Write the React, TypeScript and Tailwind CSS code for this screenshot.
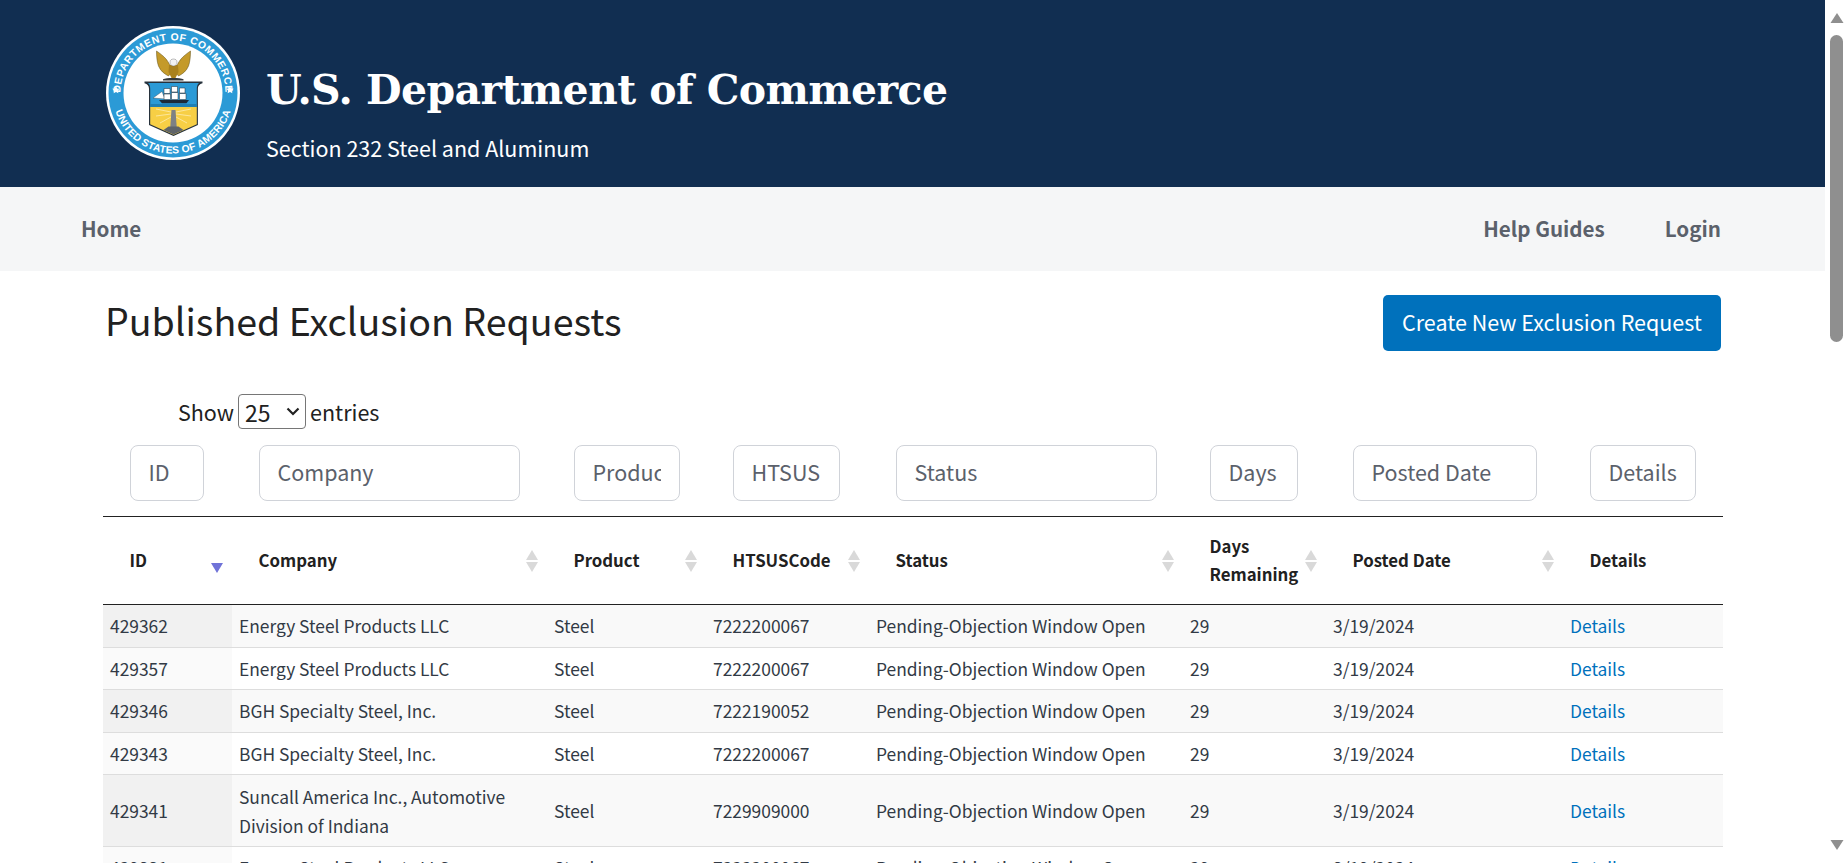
const SANS = { fontFamily: '"Noto Sans CJK SC", "Noto Sans", sans-serif' };

const rows = [
  ["429362", "Energy Steel Products LLC", "7222200067"],
  ["429357", "Energy Steel Products LLC", "7222200067"],
  ["429346", "BGH Specialty Steel, Inc.", "7222190052"],
  ["429343", "BGH Specialty Steel, Inc.", "7222200067"],
  ["429341", "Suncall America Inc., Automotive Division of Indiana", "7229909000"],
  ["429331", "Energy Steel Products LLC", "7222200067"],
];

const cols = [
  { label: "ID", ph: "ID", input: "w-[74px]", w: "w-[129px]", sort: "active" },
  { label: "Company", ph: "Company", input: "w-[261px]", w: "w-[315px]", sort: "both" },
  { label: "Product", ph: "Product", input: "w-[106px]", w: "w-[159px]", sort: "both" },
  { label: "HTSUSCode", ph: "HTSUS", input: "w-[107px]", w: "w-[163px]", sort: "both" },
  { label: "Status", ph: "Status", input: "w-[261px]", w: "w-[314px]", sort: "both" },
  { label: "Days Remaining", ph: "Days", input: "w-[88px]", w: "w-[143px]", sort: "both" },
  { label: "Posted Date", ph: "Posted Date", input: "w-[184px]", w: "w-[237px]", sort: "both" },
  { label: "Details", ph: "Details", input: "w-[106px]", w: "w-[160px]", sort: "none" },
];

function Seal() {
  return (
    <svg width="134" height="134" viewBox="0 0 134 134" className="shrink-0 mb-[2px]">
      <defs>
        <path id="sealTop" d="M 17.7 85 A 52.5 52.5 0 1 1 116.3 85" />
        <path id="sealBottom" d="M 10.15 46.3 A 60.5 60.5 0 1 0 123.85 46.3" />
      </defs>
      <circle cx="67" cy="67" r="67" fill="#ffffff" />
      <circle cx="67" cy="67" r="64.500" fill="#2b9ad6" />
      <circle cx="67" cy="67" r="49.500" fill="#ffffff" />
      <text fontFamily="Liberation Sans, sans-serif" fontSize="10.300" fontWeight="700" fill="#ffffff" letterSpacing="0.55">
        <textPath href="#sealTop" startOffset="50%" textAnchor="middle">DEPARTMENT OF COMMERCE</textPath>
      </text>
      <text fontFamily="Liberation Sans, sans-serif" fontSize="10.300" fontWeight="700" fill="#ffffff" letterSpacing="0.2">
        <textPath href="#sealBottom" startOffset="50%" textAnchor="middle">UNITED STATES OF AMERICA</textPath>
      </text>
      <path d="M10 60l1.100 2.500 2.700.3-2 1.800.6 2.700-2.400-1.400-2.400 1.400.6-2.700-2-1.800 2.700-.3z" fill="#fff" />
      <path d="M124 60l1.100 2.500 2.700.3-2 1.800.6 2.700-2.400-1.400-2.400 1.400.6-2.700-2-1.800 2.700-.3z" fill="#fff" />
      {/* eagle */}
      <path d="M50.500 25c3 2 7 5 9.500 8 1.500 1.800 2.500 3.500 3.500 5.500l1 9-2 2.500c-4-2-8-5-10-10-1.500-4-2-10-2-15z" fill="#c49a2a" stroke="#5f4c12" strokeWidth="0.5" />
      <path d="M84.500 25c-3 2-7 5-9.500 8-1.500 1.800-2.500 3.500-3.500 5.500l-1 9 2 2.500c4-2 8-5 10-10 1.500-4 2-10 2-15z" fill="#c49a2a" stroke="#5f4c12" strokeWidth="0.5" />
      <path d="M63 39h9l.5 7-3 6h-4l-3-6z" fill="#a9811d" />
      <path d="M64 36c0-2 1.500-3 3.500-3s3.500 1 3.500 3c0 2-1 4-3.500 4S64 38 64 36z" fill="#f2f2f2" stroke="#666" strokeWidth="0.4" />
      <path d="M57 53.200c3-1.600 17-1.600 20.500 0v1.300h-20.500z" fill="#34393d" />
      {/* shield */}
      <path d="M38.500 55.500h58v1.800c-3 .8-4.600 2.600-4.600 5.400V99L67.500 110 43 99V62.700c0-2.800-1.600-4.600-4.500-5.400z" fill="#27323c" />
      <path d="M42 57h51c-1.400 1.200-2.200 3.200-2.200 5.700V81H44.200V62.700c0-2.500-.8-4.500-2.200-5.700z" fill="#2b9ad6" />
      <path d="M44.200 81h46.600v17.200L67.500 108.700 44.200 98.200z" fill="#f7cf45" />
      {/* ship */}
      <path d="M47 72l9-6.500 3 7.500z" fill="#fff" stroke="#31404c" strokeWidth="0.4" />
      <path d="M58 62.500h6v5h-6zM58 68h6.500v5.500H58zM65.500 60.500h6v5.500h-6zM65.500 66.500h6.500v7h-6.500zM73.500 62h5.500v5h-5.500zM73.500 67.500h6.500v6h-6.500z" fill="#ffffff" stroke="#2b3640" strokeWidth="0.55" />
      <path d="M53 74h30l-2.500 3.200H56z" fill="#1d2a38" />
      <path d="M44.200 78h46.600v3H44.200z" fill="#1f7fb3" />
      {/* lighthouse */}
      <path d="M50 83l15 3M50 90l15-2M85 83l-15 3M85 90l-15-2M54 97l11-6M81 97l-11-6" stroke="#fde9a3" strokeWidth="0.9" />
      <path d="M65.500 84h4l1.200 17h-6.400z" fill="#7d8184" />
      <path d="M57.500 104l5-3.500h10l5 3.500-10 4.500z" fill="#5f6468" />
    </svg>
  );
}

function SortIcon({ kind }: { kind: string }) {
  if (kind === "none") return null;
  if (kind === "active") {
    return (
      <svg width="14" height="12" viewBox="0 0 14 12" className="absolute right-[8px] top-[45px]">
        <path d="M1 1h12l-6 10z" fill="#7073d8" />
      </svg>
    );
  }
  return (
    <svg width="14" height="24" viewBox="0 0 14 24" className="absolute right-[8px] top-[32px]">
      <path d="M7 1l6 10H1z" fill="#d9d9d9" />
      <path d="M1 13h12l-6 10z" fill="#d9d9d9" />
    </svg>
  );
}

function Scrollbar() {
  return (
    <aside className="w-[23px] h-[863px] shrink-0 bg-white flex flex-col items-center relative">
      <svg width="16" height="12" viewBox="0 0 16 12" className="mt-[12px] shrink-0">
        <path d="M8 1l6.500 10H1.500z" fill="#8f8f8f" />
      </svg>
      <div className="w-[13px] h-[307px] mt-[11px] rounded-t-[7px] rounded-b-[7px] bg-[#8f8f8f] shrink-0" />
      <svg width="16" height="12" viewBox="0 0 16 12" className="mt-auto mb-[12px] shrink-0">
        <path d="M1.500 1h13L8 11z" fill="#8f8f8f" />
      </svg>
    </aside>
  );
}

export default function App() {
  return (
    <div className="flex w-[1848px] h-[863px] overflow-hidden bg-white" style={SANS}>
      <main className="w-[1825px] h-[863px] overflow-hidden shrink-0">
        <header className="h-[187px] bg-[#112e51] flex items-center pl-[106px] gap-[26px] text-white">
          <Seal />
          <div className="flex flex-col pt-[38px]">
            <h1 className="text-[41px] leading-[56px] font-bold tracking-[-0.6px]" style={{ fontFamily: '"DejaVu Serif", serif' }}>
              U.S. Department of Commerce
            </h1>
            <p className="text-[21.500px] leading-[30px] mt-[15px]">Section 232 Steel and Aluminum</p>
          </div>
        </header>

        <nav className="h-[84px] bg-[#f5f6f7] flex items-center justify-between pl-[81px] pr-[104px] pb-[1px] text-[20.600px] font-semibold text-[#5b616b]">
          <a>Home</a>
          <div className="flex gap-[60px]">
            <a>Help Guides</a>
            <a>Login</a>
          </div>
        </nav>

        <section className="pl-[103px] pr-[102px]">
          <div className="flex items-center justify-between pt-[24px] pl-[2px] pr-[2px]">
            <h2 className="text-[37.600px] leading-[56px] text-[#212121] -translate-y-[3px]">Published Exclusion Requests</h2>
            <button className="h-[56px] w-[338px] rounded-[5px] bg-[#0071bc] text-white text-[21.500px] font-normal pb-[2px]">
              Create New Exclusion Request
            </button>
          </div>

          <div className="flex items-center gap-[4px] pl-[75px] mt-[43px] text-[21.500px] leading-[35px] text-[#212121]">
            <span>Show</span>
            <div className="relative w-[68px] h-[35px]">
              <select className="appearance-none w-[68px] h-[35px] rounded-[4px] border border-[#767676] bg-white pl-[6px] text-[23px]" defaultValue="25">
                <option>10</option>
                <option>25</option>
                <option>50</option>
                <option>100</option>
              </select>
              <svg width="14" height="9" viewBox="0 0 14 9" className="absolute right-[6px] top-[13px] pointer-events-none">
                <path d="M1.500 1.500l5.500 5.500 5.500-5.500" fill="none" stroke="#222" strokeWidth="2.200" />
              </svg>
            </div>
            <span>entries</span>
          </div>

          <table className="w-[1620px] table-fixed border-collapse mt-[16px] text-[#212121]">
            <colgroup>
              {cols.map((c) => (
                <col key={c.label} className={c.w} />
              ))}
            </colgroup>
            <thead>
              <tr>
                {cols.map((c) => (
                  <th key={c.ph} className="pl-[26.500px] pb-[15px] text-left font-normal">
                    <input
                      placeholder={c.ph}
                      readOnly
                      className={`${c.input} h-[56px] rounded-[8px] border border-[#d0d3d9] bg-white pl-[18px] pr-[18px] pb-[3px] text-[21.500px] placeholder:text-[#5b616b]`}
                    />
                  </th>
                ))}
              </tr>
              <tr className="border-y border-[#222222]">
                {cols.map((c) => (
                  <th key={c.label} className="relative h-[88px] pl-[26.500px] pr-[27px] pb-[2px] text-left text-[16.800px] leading-[28px] font-bold">
                    {c.label}
                    <SortIcon kind={c.sort} />
                  </th>
                ))}
              </tr>
            </thead>
            <tbody className="text-[17.400px] leading-[29px] text-[#323a45]">
              {rows.map((r, i) => {
                const odd = i % 2 === 0;
                return (
                  <tr key={r[0]} className={`border-b border-[#dddddd] ${odd ? "bg-[#f9f9f9]" : "bg-white"}`}>
                    <td className={`pl-[7px] pr-[8px] py-[6.300px] ${odd ? "bg-[#f1f1f1]" : "bg-[#fafafa]"}`}>{r[0]}</td>
                    <td className="pl-[7px] pr-[8px] py-[6.300px]">{r[1]}</td>
                    <td className="pl-[7px] pr-[8px] py-[6.300px]">Steel</td>
                    <td className="pl-[7px] pr-[8px] py-[6.300px]">{r[2]}</td>
                    <td className="pl-[7px] pr-[8px] py-[6.300px]">Pending-Objection Window Open</td>
                    <td className="pl-[7px] pr-[8px] py-[6.300px]">29</td>
                    <td className="pl-[7px] pr-[8px] py-[6.300px]">3/19/2024</td>
                    <td className="pl-[7px] pr-[8px] py-[6.300px]">
                      <a className="text-[#0071bc]">Details</a>
                    </td>
                  </tr>
                );
              })}
            </tbody>
          </table>
        </section>
      </main>
      <Scrollbar />
    </div>
  );
}
